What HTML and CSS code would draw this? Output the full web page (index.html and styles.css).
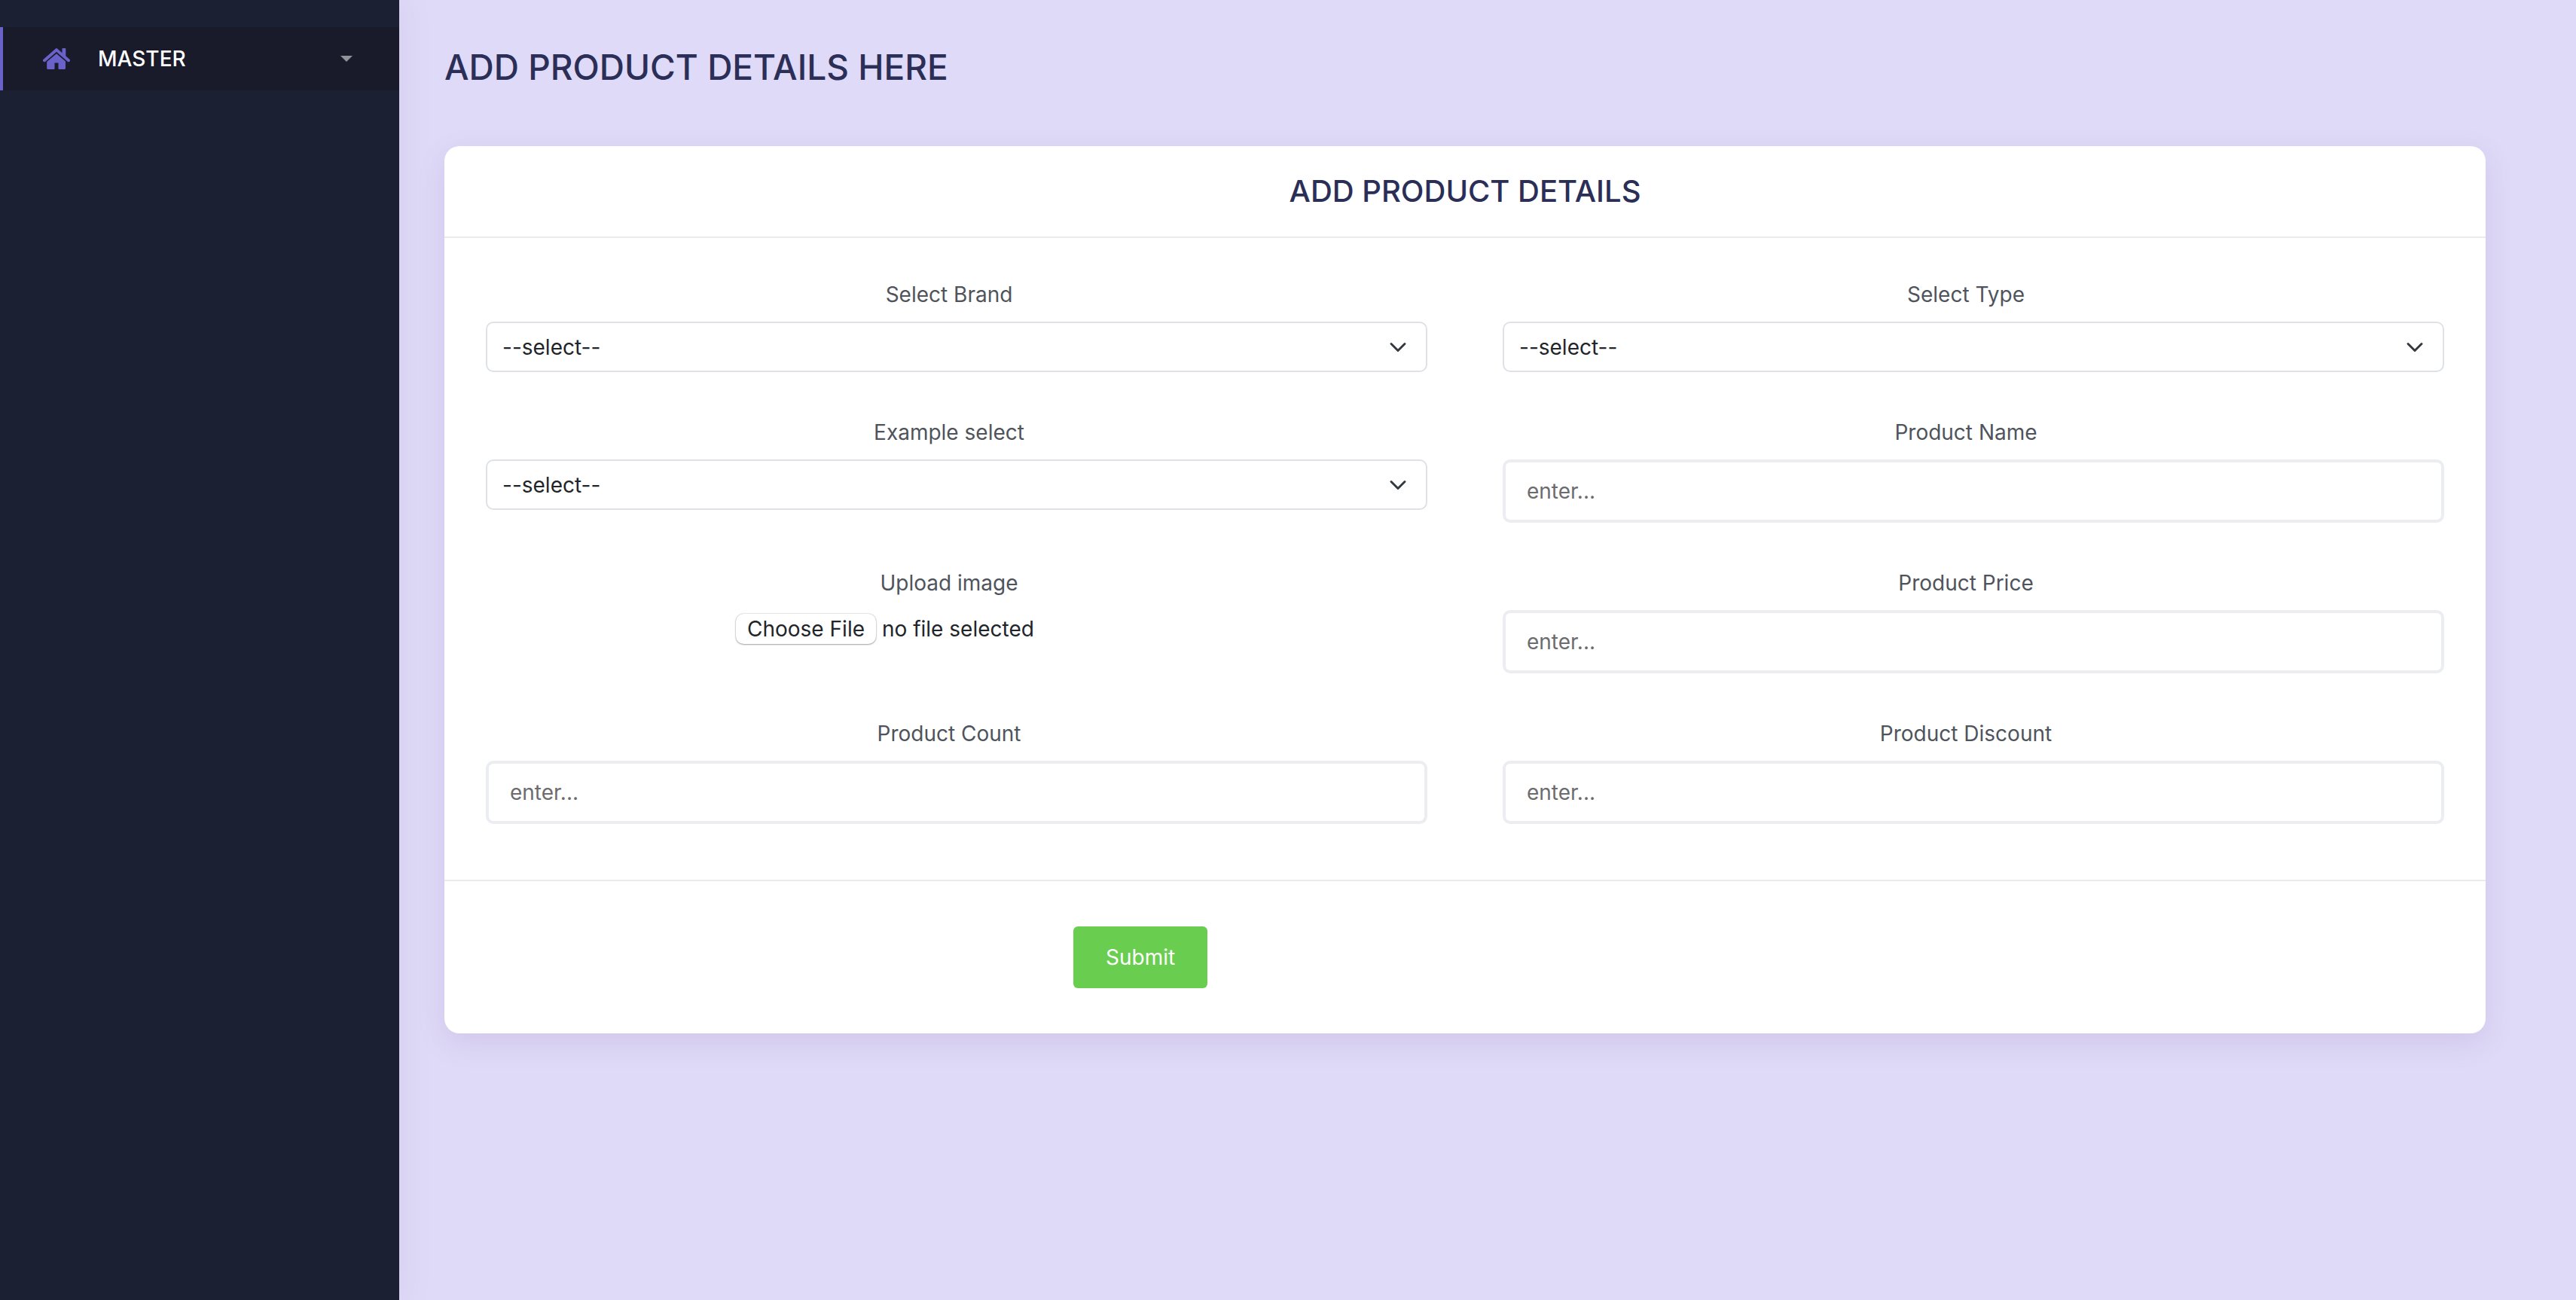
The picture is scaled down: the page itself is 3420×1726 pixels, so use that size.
FILE: index.html
```html
<!DOCTYPE html>
<html lang="en">
<head>
<meta charset="utf-8">
<meta name="viewport" content="width=device-width, initial-scale=1">
<title>Add Product Details</title>
<link rel="stylesheet" href="styles.css">
</head>
<body>
<div class="layout">
  <nav class="sidebar" aria-label="Main">
    <a class="sidebar-link" href="#master">
      <svg class="icon-home" viewBox="0 0 36 28" aria-hidden="true">
        <path d="M2 16.200 18 2.200l16 14" fill="none" stroke="currentColor" stroke-width="4" stroke-linecap="round" stroke-linejoin="round"/>
        <path d="M25.500 0.800q0-.8.8-.8h3.200q.8 0 .8.800V13l-4.800-4.200z" fill="currentColor"/>
        <path d="M18 7.200 30 17.400V26.500q0 1.500-1.500 1.500h-7q-1 0-1-1v-7.600h-5V27q0 1-1 1h-7.500Q5.200 28 5.200 26.500V18z" fill="currentColor"/>
      </svg>
      <span class="sidebar-text">MASTER</span>
      <svg class="icon-caret" viewBox="0 0 16 8" aria-hidden="true"><path d="M0 0h16L8 8z" fill="currentColor"/></svg>
    </a>
  </nav>
  <main class="content">
    <h1 class="page-title">ADD PRODUCT DETAILS HERE</h1>
    <form class="card">
      <header class="card-header"><h2 class="card-title">ADD PRODUCT DETAILS</h2></header>
      <div class="card-body">
        <div class="field">
          <label class="field-label" for="brand">Select Brand</label>
          <div class="select-wrap">
            <select class="select" id="brand"><option>--select--</option></select>
            <svg class="icon-chevron" viewBox="0 0 16 16" aria-hidden="true"><path d="m2 5 6 6 6-6"/></svg>
          </div>
        </div>
        <div class="field">
          <label class="field-label" for="type">Select Type</label>
          <div class="select-wrap">
            <select class="select" id="type"><option>--select--</option></select>
            <svg class="icon-chevron" viewBox="0 0 16 16" aria-hidden="true"><path d="m2 5 6 6 6-6"/></svg>
          </div>
        </div>
        <div class="field">
          <label class="field-label" for="example">Example select</label>
          <div class="select-wrap">
            <select class="select" id="example"><option>--select--</option></select>
            <svg class="icon-chevron" viewBox="0 0 16 16" aria-hidden="true"><path d="m2 5 6 6 6-6"/></svg>
          </div>
        </div>
        <div class="field">
          <label class="field-label" for="name">Product Name</label>
          <input class="input" id="name" type="text" placeholder="enter...">
        </div>
        <div class="field">
          <label class="field-label" for="image">Upload image</label>
          <div class="file">
            <input class="file-input" id="image" type="file">
            <span class="file-button" aria-hidden="true">Choose File</span>
            <span class="file-status">no file selected</span>
          </div>
        </div>
        <div class="field">
          <label class="field-label" for="price">Product Price</label>
          <input class="input" id="price" type="text" placeholder="enter...">
        </div>
        <div class="field">
          <label class="field-label" for="count">Product Count</label>
          <input class="input" id="count" type="text" placeholder="enter...">
        </div>
        <div class="field">
          <label class="field-label" for="discount">Product Discount</label>
          <input class="input" id="discount" type="text" placeholder="enter...">
        </div>
      </div>
      <footer class="card-footer"><button class="submit" type="submit">Submit</button></footer>
    </form>
  </main>
</div>
</body>
</html>
```
FILE: styles.css
```css
* {
  box-sizing: border-box;
}

body {
  margin: 0;
  background: #dfdaf8;
  color: #212529;
  font-family: Inter, "Liberation Sans", sans-serif;
  font-size: 28px;
  line-height: 42px;
}

.layout {
  display: flex;
  min-height: 100vh;
}

.sidebar {
  flex: 0 0 530px;
  padding-top: 36px;
  background: #1c2033;
  box-shadow: 0 0 40px rgba(160, 130, 180, 0.14);
}

.sidebar-link {
  display: flex;
  align-items: center;
  height: 84px;
  padding: 0 62px 0 53px;
  border-left: 4px solid #6a62c8;
  background: #191b2b;
  color: #fff;
  font-weight: 500;
  text-decoration: none;
}

.icon-home {
  width: 36px;
  height: 28px;
  color: #6a62c8;
}

.sidebar-text {
  flex: 1;
  padding-left: 37px;
}

.icon-caret {
  width: 16px;
  height: 8px;
  color: #8f9497;
}

.content {
  flex: 1;
  min-width: 0;
  padding: 54px 120px 60px 60px;
}

.page-title {
  margin: 0 0 70px;
  color: #2b2e56;
  font-size: 46px;
  font-weight: 550;
  line-height: 70px;
}

.card {
  border-radius: 20px;
  background: #fff;
  box-shadow: 0 12px 36px rgba(139, 98, 160, 0.16);
}

.card-header {
  padding: 30px;
  border-bottom: 2px solid #ebebeb;
}

.card-title {
  margin: 0;
  color: #2b2e56;
  font-size: 40px;
  font-weight: 550;
  line-height: 60px;
  text-align: center;
}

.card-body {
  display: grid;
  grid-template-columns: 1fr 1fr;
  gap: 59px 100px;
  padding: 54px 55px 74px;
}

.field {
  display: flex;
  flex-direction: column;
  gap: 15px;
}

.field-label {
  padding-right: 20px;
  color: #4f545c;
  text-align: center;
}

.select-wrap {
  position: relative;
}

.select,
.input {
  display: block;
  width: 100%;
  background: #fff;
  color: #212529;
  font: inherit;
}

.select {
  height: 67px;
  padding: 0 72px 0 20px;
  border: 2px solid #dee2e6;
  border-radius: 10px;
  appearance: none;
}

.icon-chevron {
  position: absolute;
  top: 22px;
  right: 27px;
  width: 24px;
  height: 24px;
  fill: none;
  stroke: #343a40;
  stroke-width: 2;
  stroke-linecap: round;
  stroke-linejoin: round;
  pointer-events: none;
}

.input {
  height: 84px;
  padding: 0 28px;
  border: 4px solid #ebedf3;
  border-radius: 10px;
}

.input::placeholder {
  color: #6c6c6f;
  opacity: 1;
}

.file {
  position: relative;
  display: flex;
  align-items: center;
  align-self: center;
  gap: 8px;
  width: 586px;
  padding-top: 4px;
}

.file-input {
  position: absolute;
  inset: 0;
  width: 100%;
  opacity: 0;
}

.file-button {
  padding: 0 15px;
  border-radius: 10px;
  background: #fff;
  box-shadow: 0 0 2px rgba(0, 0, 0, 0.3), 0 1px 2px rgba(0, 0, 0, 0.3);
  line-height: 40px;
}

.card-footer {
  padding: 60px 55px;
  border-top: 2px solid #ebebeb;
}

.submit {
  display: block;
  height: 82px;
  margin-left: 30%;
  padding: 0 43px;
  border: 0;
  border-radius: 6px;
  background: #69cd50;
  color: #fff;
  font: inherit;
}
```
